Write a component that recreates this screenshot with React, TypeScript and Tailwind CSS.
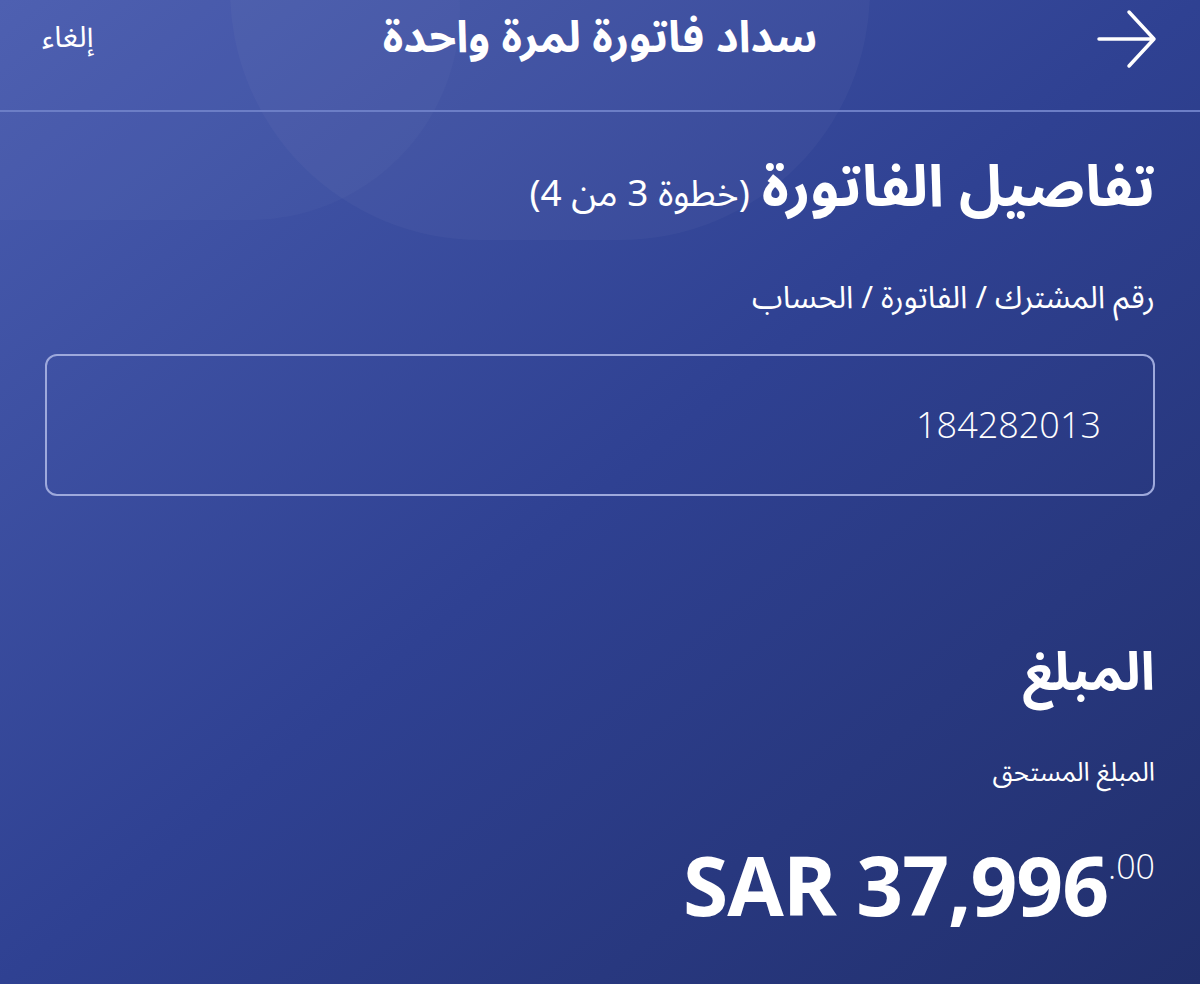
import { useState } from "react";

const arabic = "font-['Noto_Sans_Arabic','DejaVu_Sans',sans-serif]";

function BackArrow() {
  return (
    <svg width="62" height="62" viewBox="0 0 62 62" fill="none" aria-hidden="true">
      <path d="M3 31H57M33 4L58 31L33 58" stroke="white" strokeWidth="3.5" strokeLinecap="round" strokeLinejoin="round" />
    </svg>
  );
}

export default function App() {
  const [account] = useState("184282013");

  return (
    <div
      dir="rtl"
      className={`relative h-[984px] w-[1200px] overflow-hidden bg-gradient-to-br from-[#4a5db0] via-[#2f4192] to-[#212f6c] text-white ${arabic}`}
    >
      {/* decorative curves */}
      <div className="pointer-events-none absolute top-[-260px] left-[230px] h-[500px] w-[640px] rounded-full bg-white/[0.03]" />
      <div className="pointer-events-none absolute top-[-200px] left-[-300px] h-[420px] w-[760px] rounded-full bg-white/[0.025]" />

      <header className="relative grid h-[112px] grid-cols-[1fr_auto_1fr] items-start border-b-2 border-[#6c7ec6] px-[42px] pt-[2px]">
        <div className="pt-[6px]">
          <BackArrow />
        </div>
        <h1 className="px-2 py-1 whitespace-nowrap text-[44px] font-bold leading-[64px]">سداد فاتورة لمرة واحدة</h1>
        <button className="mt-[14px] justify-self-end text-[30px] leading-[44px]">إلغاء</button>
      </header>

      <main className="relative px-[45px]">
        <div className="mt-[46px] flex h-[60px] items-baseline gap-3">
          <h2 className="text-[58px] font-bold leading-[60px]">تفاصيل الفاتورة</h2>
          <span className="text-[37px] leading-[60px]">(خطوة 3 من 4)</span>
        </div>

        <p className="mt-[62px] text-[31px] leading-[36px]">رقم المشترك / الفاتورة / الحساب</p>

        <div className="mt-[38px] flex h-[142px] items-center rounded-[12px] border-2 border-[#9ea9dc] px-[52px]">
          <span className="font-['Open_Sans',sans-serif] text-[36px] font-light leading-none">{account}</span>
        </div>

        <h2 className="mt-[147px] text-[53px] font-bold leading-[60px]">المبلغ</h2>

        <p className="mt-[52px] text-[26px] leading-[36px]">المبلغ المستحق</p>

        <div dir="ltr" className="mt-[52px] flex justify-end font-['Open_Sans',sans-serif]">
          <span className="text-[82px] font-bold leading-none tracking-[-1px]">SAR 37,996</span>
          <span className="mt-[6px] text-[34px] font-light leading-none">.00</span>
        </div>
      </main>
    </div>
  );
}
